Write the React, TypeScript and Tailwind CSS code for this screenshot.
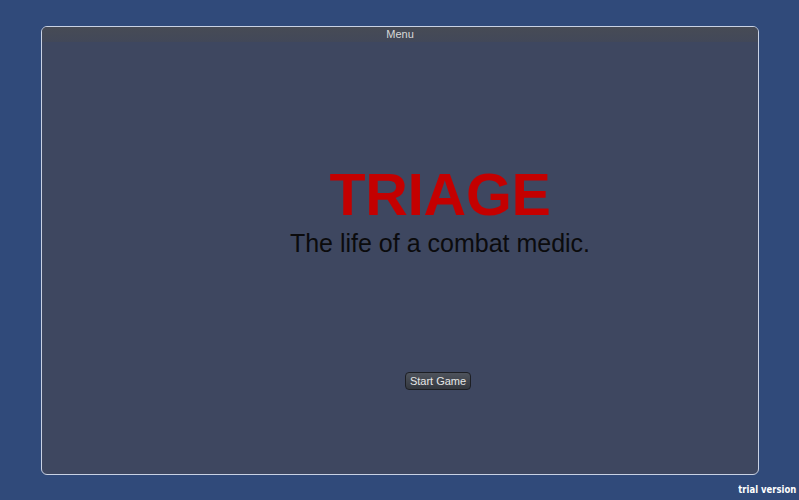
export default function App() {
  return (
    <div className="w-[799px] h-[500px] bg-[#304a7a] flex flex-col font-['Liberation_Sans',Arial,sans-serif]">
      <div className="pt-[26px] pl-[41px] pr-[40px] h-[475px] flex">
        {/* menu window */}
        <div className="flex-1 flex flex-col rounded-[6px] border-[1.5px] border-[#c9d2e4] bg-[#3e4760] overflow-hidden">
          <div className="h-[15px] bg-gradient-to-b from-[#474b55] to-[#424859] flex items-center justify-center">
            <span className="text-[11px] leading-none text-[#d8d8d8]">Menu</span>
          </div>
          <div className="flex-1 flex flex-col items-center pl-[80px]">
            <h1 className="mt-[124px] text-[59px] leading-none font-bold text-[#c40000] tracking-[-0.3px]">
              TRIAGE
            </h1>
            <p className="mt-[6px] text-[25px] leading-none text-[#0b0b0d]">
              The life of a combat medic.
            </p>
            <button className="mt-[116px] mr-[4px] h-[18px] px-[4px] rounded-[4px] border border-[#1d1f24] bg-gradient-to-b from-[#4e535c] to-[#34383f] text-[11px] leading-none text-[#e6e6e6]">
              Start Game
            </button>
          </div>
        </div>
      </div>
      <div className="flex-1 flex items-center justify-end pr-[3px] pt-[6px]">
        <span className="inline-block origin-right scale-x-[0.77] text-[11px] font-bold text-white font-['DejaVu_Sans',sans-serif]">
          trial version
        </span>
      </div>
    </div>
  );
}
